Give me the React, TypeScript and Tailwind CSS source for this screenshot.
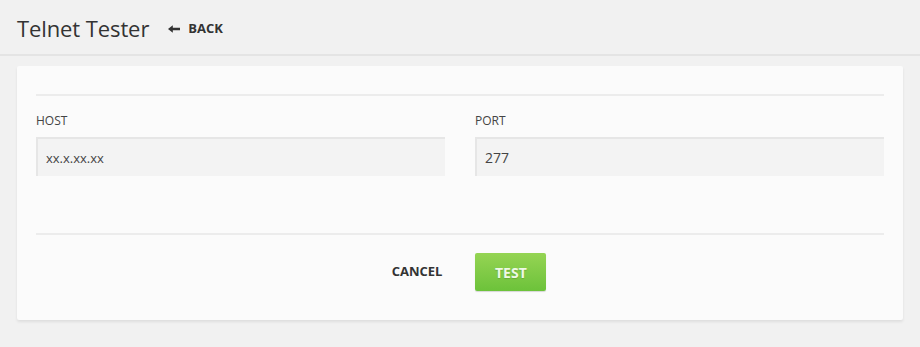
import { useState } from 'react'

export default function App() {
  const [host, setHost] = useState('xx.x.xx.xx')
  const [port, setPort] = useState('277')

  return (
    <main
      className="min-h-[347px] bg-[#f1f1f1] text-[#333]"
      style={{ fontFamily: '"Open Sans", "Noto Sans", sans-serif' }}
    >
      <header className="flex h-[56px] items-center gap-[19px] border-b-2 border-[#e4e4e4] px-[17px] pt-[1px]">
        <h1 className="text-[22px] leading-none tracking-[-0.1px] text-[#333]">Telnet Tester</h1>
        <button className="flex items-center gap-[8px] pt-[3px] text-[13px] font-bold text-[#333]">
          <svg width="12" height="8" viewBox="0 0 12 8" fill="#333">
            <path d="M0 4 L4.8 0.2 V2.8 H12 V5.2 H4.8 V7.8 Z" />
          </svg>
          BACK
        </button>
      </header>

      <section className="mx-[17px] mt-[10px] rounded-[2px] bg-[#fbfbfb] px-[19px] pb-[29px] pt-[28px] shadow-[0_2px_3px_rgba(0,0,0,0.08)]">
        <hr className="border-t-2 border-[#ececec]" />

        <div className="grid grid-cols-2 gap-[30px] pt-[17px]">
          <label className="flex flex-col">
            <span className="text-[12px] leading-[16px] text-[#444]">HOST</span>
            <input
              value={host}
              onChange={(e) => setHost(e.target.value)}
              className="mt-[8px] h-[39px] border-l-2 border-t-2 border-[#e6e6e6] bg-[#f3f3f3] px-[8px] text-[13px] text-[#444] outline-none"
            />
          </label>
          <label className="flex flex-col">
            <span className="text-[12px] leading-[16px] text-[#444]">PORT</span>
            <input
              value={port}
              onChange={(e) => setPort(e.target.value)}
              className="mt-[8px] h-[39px] border-l-2 border-t-2 border-[#e6e6e6] bg-[#f3f3f3] px-[8px] text-[14px] text-[#444] outline-none"
            />
          </label>
        </div>

        <hr className="mt-[57px] border-t-2 border-[#ececec]" />

        <div className="flex items-center justify-center gap-[33px] pl-[18px] pt-[18px]">
          <button className="text-[13px] font-bold text-[#333]">CANCEL</button>
          <button className="h-[38px] w-[71px] rounded-[2px] bg-gradient-to-b from-[#95d453] to-[#6cc23a] text-[14px] font-bold text-[#eef8e6] [text-shadow:0_1px_1px_rgba(0,0,0,0.15)] shadow-[0_1px_1px_rgba(0,0,0,0.15)]">
            TEST
          </button>
        </div>
      </section>
    </main>
  )
}
